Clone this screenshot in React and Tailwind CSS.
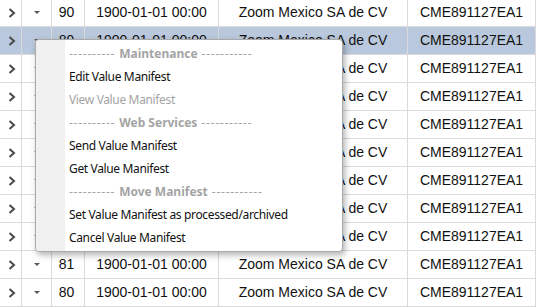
import React from "react";
import clsx from "clsx";

// ─── 그리드 데이터 ───
const rows = [90, 89, 88, 87, 86, 85, 84, 83, 82, 81, 80].map((id) => ({
  id,
  date: "1900-01-01 00:00",
  name: "Zoom Mexico SA de CV",
  rfc: "CME891127EA1",
}));

// ─── 컨텍스트 메뉴 항목 ───
const menuItems = [
  { type: "header", label: "Maintenance" },
  { type: "item", label: "Edit Value Manifest" },
  { type: "item", label: "View Value Manifest", disabled: true },
  { type: "header", label: "Web Services" },
  { type: "item", label: "Send Value Manifest" },
  { type: "item", label: "Get Value Manifest" },
  { type: "header", label: "Move Manifest" },
  { type: "item", label: "Set Value Manifest as processed/archived" },
  { type: "item", label: "Cancel Value Manifest" },
];

function Chevron() {
  return (
    <svg width="8" height="10" viewBox="0 0 8 10">
      <path d="M1.5 1 L6 5 L1.5 9" fill="none" stroke="#4a4a4a" strokeWidth="2" />
    </svg>
  );
}

function Caret() {
  return (
    <svg width="8" height="5" viewBox="0 0 8 5">
      <path d="M1 1 L7 1 L4 4 Z" fill="#5a5a5a" />
    </svg>
  );
}

export default function App() {
  return (
    <div className="relative w-[536px] h-[307px] overflow-hidden bg-white font-['Liberation_Sans',Arial,sans-serif] text-[14px] text-[#111]">
      {/* ── 그리드 (1px 스크롤됨) ── */}
      <div className="mt-[-1px]">
        {rows.map((row, i) => (
          <div
            key={row.id}
            className={clsx(
              "flex h-[28px] border-b border-[#dadada]",
              i === 1 ? "bg-[#b9c8dc]" : "bg-white"
            )}
          >
            <div className="w-[22px] flex items-center justify-center pl-[3px] border-r border-[#dadada]">
              <Chevron />
            </div>
            <div className="w-[30px] flex items-center justify-center border-r border-[#dadada]">
              <Caret />
            </div>
            <div className="w-[33px] flex items-center justify-center pr-[3px] border-r border-[#dadada]">
              {row.id}
            </div>
            <div className="w-[134px] flex items-center justify-center border-r border-[#dadada]">
              {row.date}
            </div>
            <div className="w-[189px] flex items-center justify-center border-r border-[#dadada]">
              {row.name}
            </div>
            <div className="w-[128px] flex items-center justify-center border-r border-[#dadada]">
              {row.rfc}
            </div>
          </div>
        ))}
      </div>

      {/* ── 컨텍스트 메뉴 ── */}
      <div className="absolute left-[35px] top-[39px] w-[308px] rounded-[4px] border border-[#a9a9a9] bg-white py-[2px] shadow-[2px_3px_6px_rgba(0,0,0,0.3)] font-['Noto_Sans','Open_Sans',sans-serif] text-[12px]">
        <div className="absolute left-0 top-0 bottom-0 w-[29px] rounded-l-[4px] bg-[#f0f0f0]" />
        {menuItems.map((item, i) =>
          item.type === "header" ? (
            <div
              key={i}
              className="relative h-[23px] flex items-center pl-[33px] whitespace-nowrap text-[#a4a4a4]"
            >
              <span className="tracking-[0.75px]">----------</span>
              <span className="font-bold px-[4px]">{item.label}</span>
              <span className="tracking-[0.75px]">-----------</span>
            </div>
          ) : (
            <div
              key={i}
              className={clsx(
                "relative h-[23px] flex items-center pl-[33px] whitespace-nowrap tracking-[-0.35px]",
                item.disabled ? "text-[#a4a4a4]" : "text-[#111]"
              )}
            >
              {item.label}
            </div>
          )
        )}
      </div>
    </div>
  );
}
